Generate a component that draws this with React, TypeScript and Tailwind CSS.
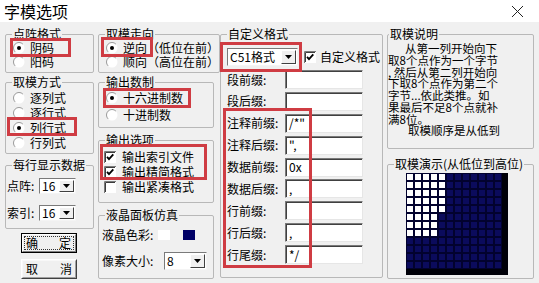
import React from "react";

const Radio = ({ on }: { on?: boolean }) => (
  <svg width="12" height="12" viewBox="0 0 12 12" className="shrink-0">
    <circle cx="6" cy="6" r="5.5" fill="#fff" />
    <path d="M2.1 9.9A5.5 5.5 0 0 1 9.9 2.1" fill="none" stroke="#9a9a9a" />
    {on && <circle cx="6" cy="6" r="2" fill="#000" />}
  </svg>
);

const Check = ({ on }: { on?: boolean }) => (
  <svg width="12" height="12" viewBox="0 0 12 12" className="shrink-0">
    <rect x="0" y="0" width="12" height="12" fill="#fff" />
    <path d="M0.5 12V0.5H12" fill="none" stroke="#7a7a7a" />
    <path d="M1.5 11V1.5H11" fill="none" stroke="#3c3c3c" />
    {on && <path d="M3 5.8L5 8.2L9.3 3.3" fill="none" stroke="#000" strokeWidth="1.8" />}
  </svg>
);

const RadioRow = ({ on, label, className = "" }: { on?: boolean; label: string; className?: string }) => (
  <div className={`flex items-center h-[14px] ${className}`}>
    <Radio on={on} />
    <span className="ml-[5px] whitespace-nowrap">{label}</span>
  </div>
);

const CheckRow = ({ on, label }: { on?: boolean; label: string }) => (
  <div className="flex items-center h-[15px]">
    <Check on={on} />
    <span className="ml-[6px] whitespace-nowrap">{label}</span>
  </div>
);

const Combo = ({ value, className = "" }: { value: string; className?: string }) => (
  <div className={`flex bg-white border border-t-[#7a7a7a] border-l-[#7a7a7a] border-r-[#f4f4f4] border-b-[#f4f4f4] ${className}`}>
    <span className="flex-1 flex items-center pl-[2px] leading-none">{value}</span>
    <span className="w-[15px] m-[1px] bg-[#f0f0f0] border border-t-white border-l-white border-r-[#404040] border-b-[#404040] flex items-center justify-center">
      <svg width="7" height="4" viewBox="0 0 7 4">
        <path d="M0 0H7L3.5 4Z" fill="#000" />
      </svg>
    </span>
  </div>
);

const Input = ({ value = "" }: { value?: string }) => (
  <div className="w-[78px] h-[19px] bg-white border border-t-[#7a7a7a] border-l-[#7a7a7a] border-r-[#e6e6e6] border-b-[#e6e6e6] shadow-[inset_1px_1px_0_#404040] pl-[3px] flex items-center leading-none">
    {value}
  </div>
);

const Group = ({
  title,
  className = "",
  legend = "ml-[6px]",
  children,
}: {
  title: string;
  className?: string;
  legend?: string;
  children?: React.ReactNode;
}) => (
  <fieldset className={`border border-[#b8b8b8] rounded-[2px] ${className}`}>
    <legend className={`${legend} px-[1px] text-[12px] leading-[12px] whitespace-nowrap`}>{title}</legend>
    {children}
  </fieldset>
);

const Matrix = () => {
  const cells = [];
  for (let r = 0; r < 12; r++) {
    for (let c = 0; c < 12; c++) {
      const on = (r < 5 && c < 5) || (r < 8 && c < 4);
      cells.push(
        <rect key={`${r}-${c}`} x={1 + c * 8} y={1 + r * 8} width="6" height="6" fill={on ? "#ffffff" : "#0b0b5c"} />
      );
    }
  }
  return (
    <svg width="102" height="102" viewBox="0 0 102 102">
      <rect width="102" height="102" fill="#02022e" />
      {cells}
      <rect x="96" y="0" width="6" height="102" fill="#000008" />
      <rect x="0" y="96" width="102" height="6" fill="#000008" />
    </svg>
  );
};

const notes = [
  { t: "从第一列开始向下", cls: "pl-[17px]" },
  { t: "取8个点作为一个字节", cls: "" },
  { t: ", 然后从第二列开始向", cls: "" },
  { t: "下取8个点作为第二个", cls: "" },
  { t: "字节...依此类推。如", cls: "" },
  { t: "果最后不足8个点就补", cls: "" },
  { t: "满8位。", cls: "" },
  { t: "取模顺序是从低到", cls: "pl-[20px]" },
];

const fields = [
  { label: "段前缀:", value: "" },
  { label: "段后缀:", value: "" },
  { label: "注释前缀:", value: '/*"' },
  { label: "注释后缀:", value: '",' },
  { label: "数据前缀:", value: "0x" },
  { label: "数据后缀:", value: "," },
  { label: "行前缀:", value: "" },
  { label: "行后缀:", value: "," },
  { label: "行尾缀:", value: "*/" },
];

const redBox = "absolute border-[3px] border-[#cf3c43] pointer-events-none";

export default function App() {
  return (
    <div className="relative w-[539px] h-[283px] overflow-hidden bg-[#f0f0f0] text-black text-[12px] font-['Noto_Sans_CJK_SC',sans-serif]">
      {/* title bar */}
      <div className="h-[22px] bg-white flex items-center justify-between pl-[4px] pr-[15px]">
        <span className="text-[16px] leading-none">字模选项</span>
        <svg width="13" height="13" viewBox="0 0 13 13">
          <path d="M1 1L12 12M12 1L1 12" stroke="#222" strokeWidth="1" />
        </svg>
      </div>

      <div className="flex pt-[6px] pl-[5px]">
        {/* column 1 */}
        <div className="flex flex-col w-[89px]">
          <Group title="点阵格式" className="h-[45px]">
            <div className="pt-[1px] pl-[7px]">
              <RadioRow on label="阴码" />
              <RadioRow label="阳码" />
            </div>
          </Group>
          <Group title="取模方式" className="mt-[3px] h-[78px]">
            <div className="pt-[2px] pl-[7px]">
              <RadioRow label="逐列式" className="h-[15px]" />
              <RadioRow label="逐行式" className="h-[15px]" />
              <RadioRow on label="列行式" className="h-[15px]" />
              <RadioRow label="行列式" className="h-[15px]" />
            </div>
          </Group>
          <Group title="每行显示数据" className="mt-[5px] h-[70px]">
            <div className="pt-[6px] pl-[1px] flex flex-col gap-[9px]">
              <div className="flex items-center">
                <span className="w-[32px]">点阵:</span>
                <Combo value="16" className="w-[37px] h-[16px]" />
              </div>
              <div className="flex items-center">
                <span className="w-[32px]">索引:</span>
                <Combo value="16" className="w-[37px] h-[16px]" />
              </div>
            </div>
          </Group>
          <div className="mt-[4px] ml-[16px] w-[56px] h-[20px] border border-black">
            <div className="h-full border border-t-white border-l-white border-r-[#808080] border-b-[#808080] p-[1px]">
              <div className="h-full border border-dotted border-[#333] flex items-center justify-between pl-[1px] pr-[2px]">
                <span>确</span>
                <span>定</span>
              </div>
            </div>
          </div>
          <div className="mt-[6px] ml-[16px] w-[56px] h-[20px] border border-t-white border-l-white border-r-[#404040] border-b-[#404040]">
            <div className="h-full border border-t-[#f8f8f8] border-l-[#f8f8f8] border-r-[#a0a0a0] border-b-[#a0a0a0] flex items-center justify-between pl-[3px] pr-[3px]">
              <span>取</span>
              <span>消</span>
            </div>
          </div>
        </div>

        {/* column 2 */}
        <div className="flex flex-col ml-[4px] w-[116px]">
          <Group title="取模走向" className="h-[45px]">
            <div className="pt-[1px] pl-[7px]">
              <RadioRow on label="逆向（低位在前）" />
              <RadioRow label="顺向（高位在前）" />
            </div>
          </Group>
          <Group title="输出数制" className="mt-[3px] h-[52px]">
            <div className="pt-[3px] pl-[7px] flex flex-col gap-[3px]">
              <RadioRow on label="十六进制数" />
              <RadioRow label="十进制数" />
            </div>
          </Group>
          <Group title="输出选项" className="mt-[6px] h-[69px]">
            <div className="pt-[3px] pl-[5px]">
              <CheckRow on label="输出索引文件" />
              <CheckRow on label="输出精简格式" />
              <CheckRow label="输出紧凑格式" />
            </div>
          </Group>
          <Group title="液晶面板仿真" className="mt-[6px] h-[70px]">
            <div className="pt-[7px] pl-[3px]">
              <div className="flex items-center h-[14px]">
                <span className="w-[56px]">液晶色彩:</span>
                <span className="w-[12px] h-[10px] bg-white" />
                <span className="ml-[13px] w-[12px] h-[10px] bg-[#000066]" />
              </div>
              <div className="flex items-center mt-[10px]">
                <span className="w-[62px]">像素大小:</span>
                <Combo value="8" className="w-[43px] h-[18px]" />
              </div>
            </div>
          </Group>
        </div>

        {/* column 3 */}
        <div className="ml-[6px] w-[163px]">
          <Group title="自定义格式" className="h-[250px]">
            <div className="pt-[8px] pl-[6px]">
              <div className="flex items-center">
                <Combo value="C51格式" className="w-[71px] h-[18px]" />
                <span className="ml-[6px]">
                  <Check on />
                </span>
                <span className="ml-[4px] whitespace-nowrap">自定义格式</span>
              </div>
              <div className="mt-[4px] flex flex-col gap-[2.875px]">
                {fields.map((f) => (
                  <div key={f.label} className="flex items-center h-[19px]">
                    <span className="w-[58px] whitespace-nowrap">{f.label}</span>
                    <Input value={f.value} />
                  </div>
                ))}
              </div>
            </div>
          </Group>
        </div>

        {/* column 4 */}
        <div className="flex flex-col ml-[4px] w-[147px]">
          <Group title="取模说明" legend="ml-[1px]" className="h-[121px]">
            <div className="pt-[3px] text-[11.5px] leading-[11.75px]">
              {notes.map((n, i) => (
                <div key={i} className={`whitespace-nowrap ${n.cls}`}>
                  {n.t}
                </div>
              ))}
            </div>
          </Group>
          <Group title="取模演示(从低位到高位)" className="mt-[9px] h-[121px]">
            <div className="pt-[3px] pl-[18px]">
              <Matrix />
            </div>
          </Group>
        </div>
      </div>

      {/* red annotation boxes */}
      <div className={`${redBox} left-[10px] top-[38px] w-[61px] h-[19px]`} />
      <div className={`${redBox} left-[7px] top-[117px] w-[70px] h-[19px]`} />
      <div className={`${redBox} left-[101px] top-[37px] w-[52px] h-[20px]`} />
      <div className={`${redBox} left-[103px] top-[88px] w-[88px] h-[20px]`} />
      <div className={`${redBox} left-[100px] top-[144px] w-[107px] h-[36px]`} />
      <div className={`${redBox} left-[220px] top-[42px] w-[82px] h-[30px]`} />
      <div className={`${redBox} left-[223px] top-[108px] w-[89px] h-[160px]`} />
    </div>
  );
}
